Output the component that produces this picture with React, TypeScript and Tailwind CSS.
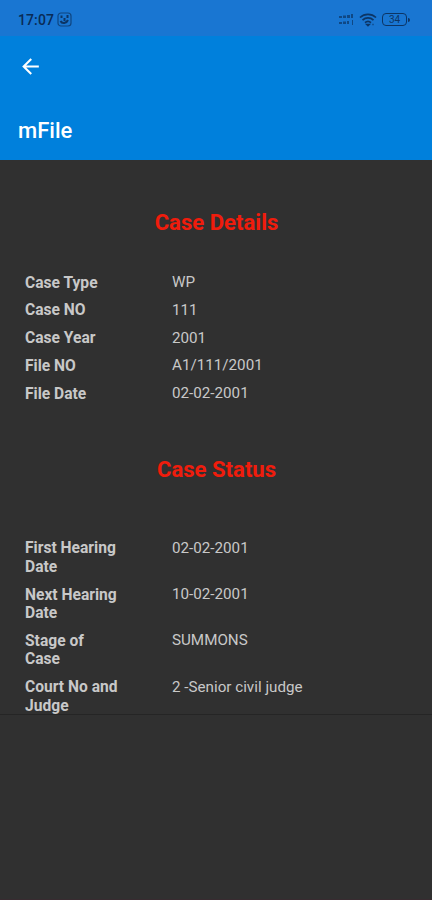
import React from "react";

const details: [string, string][] = [
  ["Case Type", "WP"],
  ["Case NO", "111"],
  ["Case Year", "2001"],
  ["File NO", "A1/111/2001"],
  ["File Date", "02-02-2001"],
];

const status: [string, string][] = [
  ["First Hearing Date", "02-02-2001"],
  ["Next Hearing Date", "10-02-2001"],
  ["Stage of Case", "SUMMONS"],
  ["Court No and Judge", "2 -Senior civil judge"],
];

function Rows({ rows }: { rows: [string, string][] }) {
  return (
    <dl className="flex flex-col gap-[9.3px] pl-[25px] text-[15.2px] leading-[18.5px] text-[#c8c8c8]">
      {rows.map(([label, value]) => (
        <div key={label} className="flex">
          <dt className="w-[96px] shrink-0 pt-[0.6px] -mb-[0.6px] text-[15.6px] font-bold">{label}</dt>
          <dd className="ml-[51px] whitespace-nowrap">{value}</dd>
        </div>
      ))}
    </dl>
  );
}

function StatusBar() {
  return (
    <div className="flex h-9 shrink-0 items-center bg-[#1976d2] pt-[3px] pl-[18px] pr-[22px] text-[#0c3565]">
      <span className="text-[14px] font-medium leading-4 tracking-[0.1px] text-[#092b56]">17:07</span>
      <svg className="ml-[3px]" width="15" height="15" viewBox="0 0 15 15" fill="none" stroke="currentColor">
        <rect x="1" y="1" width="13" height="13" rx="3" strokeWidth="1.2" opacity=".75" />
        <path d="M4.500 3.500v2.500M10.500 3v3M3.500 9c1.500 3 6 2.500 7.500-1M7.500 6v3" strokeWidth="2" />
      </svg>
      <div className="ml-auto flex items-center">
        <svg width="17" height="13" viewBox="0 0 17 13" fill="currentColor" opacity=".7">
          <path d="M1 3h3v2H1zM5 2.500h3v2.500H5zM9 2h3v3H9zM13 1h2v4h-2zM1 9h3v2H1zM5 8.500h3V11H5zM9 8h2v3H9zM14 7h1v5h-1z" />
        </svg>
        <svg className="ml-[4px]" width="18" height="14" viewBox="0 0 18 14" fill="none" stroke="currentColor" strokeWidth="1.7">
          <path d="M1 4.500C5.500.3 12.500.3 17 4.500M3.500 7.200c3.200-3 7.800-3 11 0M6 9.700c1.800-1.700 4.200-1.700 6 0" />
          <path d="M8 11.500h2l-1 1zM13.500 11.500h1" />
        </svg>
        <div className="ml-[5px] flex h-[13px] w-[25px] items-center justify-center rounded-[4px] border-[1.5px] border-current text-[10px] leading-none">
          34
        </div>
        <div className="ml-px h-1 w-[2px] rounded-r bg-current" />
      </div>
    </div>
  );
}

export default function App() {
  return (
    <div className="flex h-[900px] w-[432px] flex-col overflow-hidden bg-[#303030] font-[Roboto,sans-serif]">
      <StatusBar />
      <header className="flex h-[124px] shrink-0 flex-col bg-[#0080dc] text-white">
        <svg className="ml-[18px] mt-[18px]" width="25" height="25" viewBox="0 0 24 24" fill="currentColor" aria-label="Back">
          <path d="M20 11H7.830l5.590-5.590L12 4l-8 8 8 8 1.410-1.410L7.830 13H20z" />
        </svg>
        <h1 className="ml-[18px] mt-[39px] text-[22px] font-medium leading-[26px]">mFile</h1>
      </header>
      <main className="flex h-[555px] shrink-0 flex-col border-b border-[#252525]">
        <h2 className="mt-[49px] mb-[38px] pl-px text-center text-[22.100px] font-bold leading-[26px] text-[#f01c0c]">Case Details</h2>
        <Rows rows={details} />
        <h2 className="mt-[53.5px] mb-[56.5px] pl-px text-center text-[22.100px] font-bold leading-[26px] text-[#f01c0c]">Case Status</h2>
        <Rows rows={status} />
      </main>
      <div className="mt-auto h-px bg-[#382b30]" />
    </div>
  );
}
